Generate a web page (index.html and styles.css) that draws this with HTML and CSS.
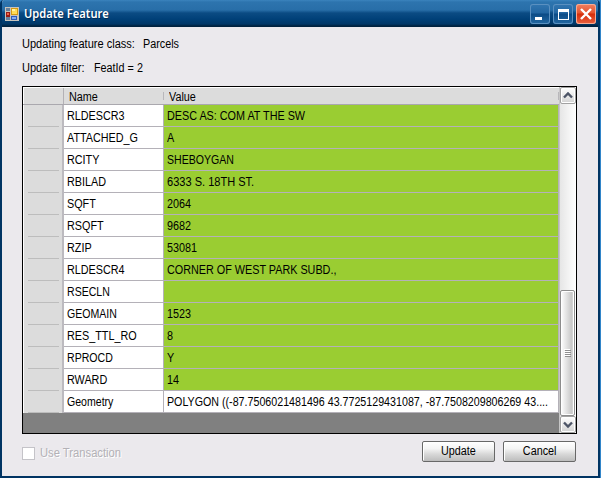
FILE: index.html
```html
<!DOCTYPE html>
<html lang="en">
<head>
<meta charset="utf-8">
<title>Update Feature</title>
<link rel="stylesheet" href="styles.css">
</head>
<body>
<div class="window">
  <header class="titlebar">
    <svg class="app-icon" width="14" height="14" viewBox="0 0 14 14" shape-rendering="crispEdges">
      <path fill="#c8c4bc" d="M0 0h14v14H0z"/>
      <path fill="#66809c" d="M1 1h4v3H1zM1 10h4v3H1z"/>
      <path fill="#9b1b14" d="M1 5h4v5H1z"/><path fill="#ef6548" d="M2 6h2v2H2z"/>
      <path fill="#d59b13" d="M6 1h7v7H6z"/><path fill="#ffdc58" d="M7 2h5v5H7z"/><path fill="#fff4a5" d="M7 2h3v2H7z"/>
      <path fill="#315bb5" d="M6 9h6v4H6z"/><path fill="#82adf4" d="M7 10h4v2H7z"/>
    </svg>
    <h1>Update Feature</h1>
    <div class="controls">
      <span class="ctl"><svg width="20" height="20" shape-rendering="crispEdges"><path fill="#fff" d="M5 13h7v3H5z"/></svg></span>
      <span class="ctl"><svg width="20" height="20" shape-rendering="crispEdges"><path fill="#fff" fill-rule="evenodd" d="M5 5h11v11H5zM6 8v7h9V8z"/></svg></span>
      <span class="ctl close"><svg width="20" height="20"><path stroke="#fff" stroke-width="2.4" d="M5 5l10 10M15 5L5 15"/></svg></span>
    </div>
  </header>
  <main>
    <p class="info"><span class="t wide">Updating feature class:</span><span class="t">Parcels</span></p>
    <p class="info second"><span class="t wide">Update filter:</span><span class="t">FeatId = 2</span></p>
    <div class="grid">
      <div class="table">
        <div class="head"><div class="corner"></div><div class="hname"><span class="t">Name</span></div><div class="hvalue"><span class="t">Value</span></div></div>
        <div class="row"><div class="rh"></div><div class="name"><span class="t">RLDESCR3</span></div><div class="value"><span class="t">DESC AS: COM AT THE SW</span></div></div>
        <div class="row"><div class="rh"></div><div class="name"><span class="t">ATTACHED_G</span></div><div class="value"><span class="t">A</span></div></div>
        <div class="row"><div class="rh"></div><div class="name"><span class="t">RCITY</span></div><div class="value"><span class="t tight">SHEBOYGAN</span></div></div>
        <div class="row"><div class="rh"></div><div class="name"><span class="t">RBILAD</span></div><div class="value"><span class="t wide">6333 S. 18TH ST.</span></div></div>
        <div class="row"><div class="rh"></div><div class="name"><span class="t">SQFT</span></div><div class="value"><span class="t">2064</span></div></div>
        <div class="row"><div class="rh"></div><div class="name"><span class="t">RSQFT</span></div><div class="value"><span class="t">9682</span></div></div>
        <div class="row"><div class="rh"></div><div class="name"><span class="t">RZIP</span></div><div class="value"><span class="t">53081</span></div></div>
        <div class="row"><div class="rh"></div><div class="name"><span class="t">RLDESCR4</span></div><div class="value"><span class="t">CORNER OF WEST PARK SUBD.,</span></div></div>
        <div class="row"><div class="rh"></div><div class="name"><span class="t tight">RSECLN</span></div><div class="value"></div></div>
        <div class="row"><div class="rh"></div><div class="name"><span class="t tight">GEOMAIN</span></div><div class="value"><span class="t">1523</span></div></div>
        <div class="row"><div class="rh"></div><div class="name"><span class="t">RES_TTL_RO</span></div><div class="value"><span class="t">8</span></div></div>
        <div class="row"><div class="rh"></div><div class="name"><span class="t tight">RPROCD</span></div><div class="value"><span class="t">Y</span></div></div>
        <div class="row"><div class="rh"></div><div class="name"><span class="t">RWARD</span></div><div class="value"><span class="t">14</span></div></div>
        <div class="row"><div class="rh"></div><div class="name"><span class="t tight">Geometry</span></div><div class="value plain"><span class="t long">POLYGON ((-87.7506021481496 43.7725129431087, -87.7508209806269 43....</span></div></div>
      </div>
      <div class="scroll">
        <div class="arrow"><svg width="14" height="15"><path fill="none" stroke="#4d5567" stroke-width="2.4" d="M3 9.5l4-4 4 4"/></svg></div>
        <div class="track"><div class="thumb"><i></i><i></i><i></i><i></i></div></div>
        <div class="arrow"><svg width="14" height="15"><path fill="none" stroke="#4d5567" stroke-width="2.4" d="M3 5.5l4 4 4-4"/></svg></div>
      </div>
    </div>
    <footer>
      <span class="check"></span><span class="t use">Use Transaction</span>
      <button><span class="t">Update</span></button><button><span class="t">Cancel</span></button>
    </footer>
  </main>
</div>
</body>
</html>
```
FILE: styles.css
```css
* { box-sizing: border-box; }
body { margin: 0; width: 601px; height: 478px; overflow: hidden; background: #3285c9; font: 12px/14px "Liberation Sans", Arial, sans-serif; color: #000; }
.window { width: 600px; height: 478px; border: solid #003463; border-width: 0 2px 2px; border-radius: 4px 4px 0 0; background: #ebe9ed; display: flex; flex-direction: column; overflow: hidden; }
.titlebar { height: 27px; flex: none; margin: 0 -2px; padding: 0 4px 0 5px; display: flex; align-items: center; background: linear-gradient(#3b83bd 0, #2d74ae 2px, #286ea8 10px, #0b4b83 13px, #004078 19px, #003767 24px, #00223f 26px, #00223f 27px); }
.app-icon { flex: none; }
h1 { margin: 0 0 0 5px; font: 600 12px/16px "Noto Sans", "Trebuchet MS", sans-serif; color: #fff; transform: scaleX(.93); transform-origin: 0 50%; white-space: nowrap; text-shadow: 1px 1px #002b55; }
.controls { margin-left: auto; display: flex; gap: 3px; }
.ctl { width: 20px; height: 20px; border-radius: 3px; display: block; background: linear-gradient(#3276b0, #2266a2 45%, #0b4b86 50%, #2368a2); box-shadow: inset 0 0 0 1px #5a90c0; }
.ctl svg, .arrow svg { display: block; }
.close { background: linear-gradient(#ef8062, #e5542f 45%, #d42d0a 50%, #eb6240); box-shadow: inset 0 0 0 1px #f5ab95; }
.t { display: inline-block; white-space: nowrap; transform: scaleX(.9); transform-origin: 0 50%; }
.wide { transform: scaleX(.92); }
.tight { transform: scaleX(.88); }
.long { transform: scaleX(.89); }
main { padding: 10px 21px 0 20px; flex: 1; }
.info { margin: 0; height: 14px; display: grid; grid-template-columns: 121px 1fr; justify-items: start; }
.second { margin-top: 10px; grid-template-columns: 72px 1fr; }
.grid { width: 555px; height: 348px; margin-top: 11px; border: 1px solid #000; background: #808080; display: flex; }
.table { width: 536px; flex: none; }
.head { display: grid; grid-template-columns: 41px 100px 395px; height: 18px; background: #dcdcdc; border-top: 1px solid #fff; border-bottom: 1px solid #aaa8ae; }
.corner { border-left: 1px solid #fff; border-right: 1px solid #b3b1b6; }
.hname, .hvalue { padding: 2px 0 0 5px; background: linear-gradient(#b8b7bb, #b8b7bb) right 4px / 1px 8px no-repeat; }
.row { display: grid; grid-template-columns: 41px 100px 395px; height: 22px; }
.rh { border-left: 1px solid #fff; border-right: 2px solid #bcbabf; background: linear-gradient(#bdbdbd, #bdbdbd) 4px 21px / 31px 1px no-repeat #dcdcdc; }
.name, .value { padding: 4px 0 0 3px; background: #fff; border-right: 1px solid #b4b1b8; border-bottom: 1px solid #b4b1b8; overflow: hidden; }
.value { background: #9acd32; }
.plain { background: #fff; }
.scroll { width: 17px; border-left: 1px solid #c6c6c6; background: linear-gradient(90deg, #e6e6e6, #fff); display: flex; flex-direction: column; }
.arrow { width: 16px; height: 17px; border: 1px solid #a2a2a2; border-radius: 2px; box-shadow: inset 0 0 0 1px #fff; background: linear-gradient(#fff, #d3d3d3); }
.track { flex: 1; padding-top: 186px; }
.thumb { width: 15px; height: 126px; border: 1px solid #8d8d8d; border-radius: 2px; box-shadow: inset 0 0 0 1px #fff; background: linear-gradient(90deg, #fff, #c9c9c9 80%, #e1e1e1); display: flex; flex-direction: column; align-items: center; justify-content: center; gap: 1px; }
.thumb i { width: 6px; height: 1px; background: #8e8e8e; box-shadow: -1px -1px #fff; }
footer { display: flex; margin: 7px 1px 0 0; height: 21px; }
.check { width: 13px; height: 13px; margin-top: 6px; border: 1px solid #c4c3c8; background: #fff; }
.use { color: #b3b1b6; margin: 5px 0 0 5px; text-shadow: 1px 1px #fff; transform: scaleX(.935); }
button { width: 73px; height: 21px; padding: 0 0 1px; border: 1px solid #686868; border-radius: 2px; background: linear-gradient(#fff, #f4f4f4 35%, #d7d7d7 65%, #bdbdbd); font: inherit; color: #000; margin-left: 8px; box-shadow: inset 1px 1px #fff; }
button .t { transform-origin: 50% 50%; }
.use + button { margin-left: auto; }
```
